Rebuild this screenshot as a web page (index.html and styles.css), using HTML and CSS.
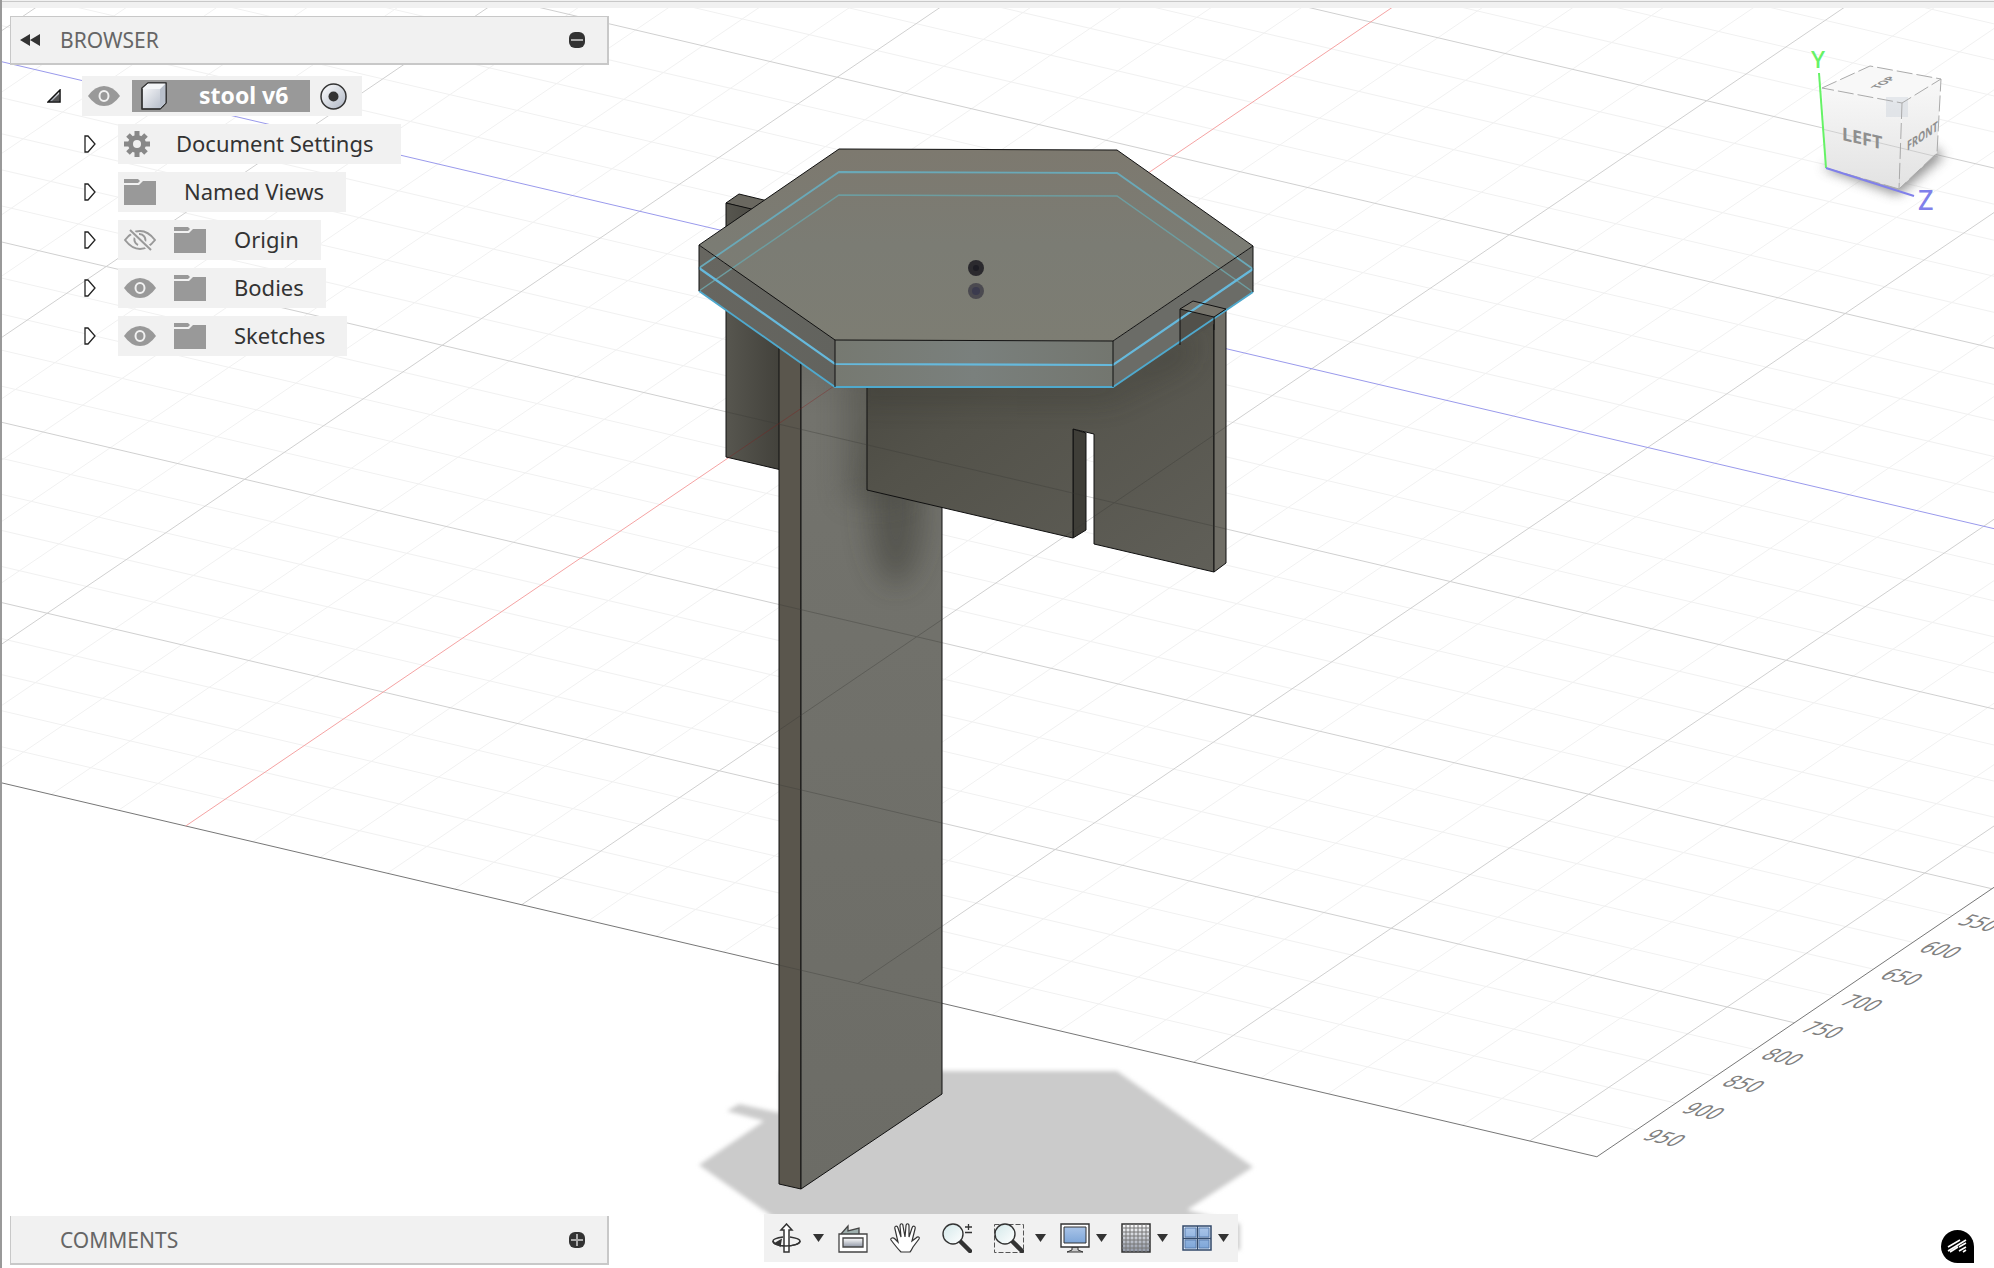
FILE: index.html
```html
<!DOCTYPE html>
<html lang="en">
<head>
<meta charset="utf-8">
<title>stool v6</title>
<link rel="stylesheet" href="styles.css">
</head>
<body>
<svg class="defs" width="0" height="0" aria-hidden="true">
  <defs>
    <linearGradient id="steel" x1="0" y1="0" x2="1" y2="1"><stop offset="0" stop-color="#fff"/><stop offset="1" stop-color="#aeb6c4"/></linearGradient>
    <linearGradient id="lens" x1="0" y1="0" x2="1" y2="1"><stop offset="0" stop-color="#d3e8ea"/><stop offset="1" stop-color="#fff"/></linearGradient>
    <linearGradient id="screen" x1="0" y1="0" x2="0" y2="1"><stop offset="0" stop-color="#a9c4e8"/><stop offset="1" stop-color="#7ea6d8"/></linearGradient>
    <linearGradient id="fade" x1="0" y1="0" x2="0" y2="1"><stop offset="0" stop-color="#fff"/><stop offset="1" stop-color="#9097a6"/></linearGradient>
  </defs>
  <symbol id="eye" viewBox="0 0 32 20"><path d="M0 10Q7 0 16 0t16 10Q25 20 16 20T0 10z" fill="#999"/><ellipse cx="16" cy="10" rx="4.500" ry="5" fill="none" stroke="#f1f1f1" stroke-width="2"/></symbol>
  <symbol id="eye-off" viewBox="0 0 32 22"><path d="M1 11Q8 2 16 2t15 9Q24 20 16 20T1 11zM11 8a6 6 0 0 0 3 8M15 5a6 6 0 0 1 6 8M14 9l5 5" fill="none" stroke="#999" stroke-width="2"/><path d="M6 1l21 20" stroke="#f1f1f1" stroke-width="5"/><path d="M6 1l21 20" stroke="#999" stroke-width="2"/></symbol>
  <symbol id="folder" viewBox="0 0 32 26"><path d="M0 0h14l2 2-2 2H0zM0 6h15l4-4h13v24H0z" fill="#999"/></symbol>
  <symbol id="twisty" viewBox="0 0 12 18"><path d="M1 1h3l7 8-7 8H1z" fill="#fff" stroke="#222" stroke-width="1.300"/></symbol>
  <symbol id="caret" viewBox="0 0 11 8"><path d="M0 0h11L5.500 8z" fill="#333"/></symbol>
</svg>

<main class="app">
  <svg class="canvas" viewBox="0 0 1994 1268" preserveAspectRatio="xMidYMid slice" role="img" aria-label="Stool model on the ground grid">
    <defs>
      <filter id="soft" x="-10%" y="-10%" width="120%" height="120%"><feGaussianBlur stdDeviation="2"/></filter>
      <filter id="wide" x="-50%" y="-50%" width="200%" height="200%"><feGaussianBlur stdDeviation="14"/></filter>
      <linearGradient id="bar" x1="0" y1="0" x2="1" y2="1"><stop offset="0" stop-color="#46453e"/><stop offset=".35" stop-color="#53524a"/><stop offset="1" stop-color="#605f58"/></linearGradient>
      <linearGradient id="back" x1="0" y1="0" x2="1" y2="0"><stop offset="0" stop-color="#57564f"/><stop offset="1" stop-color="#3f3e38"/></linearGradient>
      <linearGradient id="leg" x1="0" y1="0" x2="0" y2="1"><stop offset="0" stop-color="#666660"/><stop offset=".12" stop-color="#73736d"/><stop offset="1" stop-color="#6c6c66"/></linearGradient>
      <linearGradient id="seat" x1="0" y1="0" x2="0" y2="1"><stop offset="0" stop-color="#7d796f"/><stop offset=".5" stop-color="#7b7c74"/><stop offset="1" stop-color="#7d7d73"/></linearGradient>
      <linearGradient id="side" x1="0" y1="0" x2="1" y2="0"><stop offset="0" stop-color="#676660"/><stop offset="1" stop-color="#62635e"/></linearGradient>
      <linearGradient id="rim" x1="0" y1="0" x2="1" y2="0"><stop offset="0" stop-color="#767971"/><stop offset=".5" stop-color="#7a807d"/><stop offset="1" stop-color="#73766f"/></linearGradient>
      <clipPath id="legclip"><path d="M801 380L942 380V1094L801 1189z"/></clipPath>
      <clipPath id="barclip"><path d="M867 380H1113L1214 317V572L867 490z"/></clipPath>
      <clipPath id="solid"><path d="M726 300L801 350 835 387H1113L1226 305V563L1214 572 1094 544V434L1086 433V530L1072 538 942 508V1094L801 1189 779 1184V470L726 457z"/></clipPath>
    </defs>
    <g class="grid" transform="matrix(39.5 -26.8 67.2 15.75 185.7 826)">
      <path class="minor" d="M0-16h36M0-14h36M0-13h36M0-12h36M0-11h36M0-9h36M0-8h36M0-7h36M0-6h36M0-4h36M0-3h36M0-2h36M0-1h36M0 1h36M0 2h36M0 3h36M0 4h36M0 6h36M0 7h36M0 8h36M0 9h36M0 11h36M0 12h36M0 13h36M0 14h36M0 16h36M0 17h36M0 18h36M0 19h36"/>
      <path class="minor" d="M1-17v38M2-17v38M3-17v38M4-17v38M6-17v38M7-17v38M8-17v38M9-17v38M11-17v38M12-17v38M13-17v38M14-17v38M16-17v38M17-17v38M18-17v38M19-17v38M21-17v38M22-17v38M23-17v38M24-17v38M26-17v38M27-17v38M28-17v38M29-17v38M31-17v38M32-17v38M33-17v38M34-17v38"/>
      <path class="major" d="M0-15h36M0-10h36M0-5h36M0 5h36M0 10h36M0 15h36M0 20h36M5-17v38M10-17v38M15-17v38M25-17v38M30-17v38M35-17v38"/>
      <path class="edge" d="M0-17V21H36"/>
      <path class="red" d="M0 0h36"/>
      <path class="blue" d="M20-17v38"/>
    </g>
    <g class="marks">
      <text transform="translate(1956 924) rotate(13) skewX(-42)">550</text>
      <text transform="translate(1917 951) rotate(13) skewX(-42)">600</text>
      <text transform="translate(1878 978) rotate(13) skewX(-42)">650</text>
      <text transform="translate(1838 1004) rotate(13) skewX(-42)">700</text>
      <text transform="translate(1799 1031) rotate(13) skewX(-42)">750</text>
      <text transform="translate(1759 1058) rotate(13) skewX(-42)">800</text>
      <text transform="translate(1720 1085) rotate(13) skewX(-42)">850</text>
      <text transform="translate(1680 1112) rotate(13) skewX(-42)">900</text>
      <text transform="translate(1641 1139) rotate(13) skewX(-42)">950</text>
    </g>

    <path d="M780 1071H1117L1253 1167 1187 1210 1240 1224V1250H820L699 1165 764 1121 727 1111 739 1104 780 1113z" fill="#cbcbcb" filter="url(#soft)"/>

    <g class="ink">
      <path d="M726 203L739 194 772 202 760 212z" fill="#6a6860"/>
      <path d="M726 203L790 218V472L726 457z" fill="url(#back)"/>
      <path d="M779 300L801 310V1189L779 1184z" fill="#5a564d"/>
      <path d="M801 310H942V1094L801 1189z" fill="url(#leg)"/>
    </g>
    <g clip-path="url(#legclip)"><ellipse cx="896" cy="505" rx="28" ry="80" fill="#35342e" opacity=".45" filter="url(#wide)"/><path d="M845 370h60v130h-60z" fill="#45443d" opacity=".4" filter="url(#wide)"/></g>
    <g class="ink">
      <path d="M1073 429L1086 433V530L1073 538z" fill="#3f3e38"/>
      <path d="M867 370L1113 350 1180 309 1214 317V572L1094 544V434L1073 429V538L867 490z" fill="url(#bar)"/>
      <path d="M1214 317L1226 309V563L1214 572z" fill="#706e66"/>
    </g>
    <g clip-path="url(#barclip)"><path d="M850 380h270l70-50v30l-80 40H850z" fill="#35342d" opacity=".4" filter="url(#wide)"/></g>

    <g clip-path="url(#solid)">
      <g class="grid ghost" transform="matrix(39.5 -26.8 67.2 15.75 185.7 826)">
        <path class="dark" d="M0 5h36M0 10h36M0 15h36M5-17v38M10-17v38M15-17v38M0-17v38"/>
        <path class="crimson" d="M0 0h36"/>
      </g>
    </g>

    <path d="M699 245L835 340V387L699 291z" fill="url(#side)"/>
    <path d="M1253 246L1113 341V387L1253 292z" fill="#6b6c67"/>
    <path d="M835 340L1113 341V387H835z" fill="url(#rim)"/>
    <path d="M839 149L1117 150 1253 246 1113 341 835 340 699 245z" fill="url(#seat)"/>
    <path d="M1180 309L1214 317V324L1180 345z" fill="#52514b"/>
    <path d="M1180 309L1193 301 1226 309 1214 317z" fill="#76746b"/>
    <g fill="none" stroke="#4fa9cd">
      <path d="M699 291L839 195 1117 196 1253 292" stroke="#6d9da0" stroke-width="1.500"/>
      <path d="M699 268L839 172 1117 173 1253 269" stroke="#6aa9b8" stroke-width="1.800"/>
      <path d="M699 291L835 387 1113 387 1253 292" stroke-width="1.800"/>
      <path d="M699 268L835 364 1113 365 1253 269" stroke="#66b9dc" stroke-width="2.200"/>
    </g>
    <g fill="none" stroke="#111" stroke-width="1">
      <path d="M839 149L1117 150 1253 246 1113 341 835 340 699 245z"/>
      <path d="M699 245V291M835 340V387M1113 341V387M1253 246V292M1180 345V309L1193 301 1226 309 1214 317 1180 309M1214 317V330"/>
    </g>
    <circle cx="976" cy="268" r="8" fill="#2b2a2e"/><circle cx="976" cy="268" r="3" fill="#1d1d24"/>
    <circle cx="976" cy="291" r="8" fill="#4b4a50"/><circle cx="976" cy="291" r="4" fill="#3b3b4e"/>
  </svg>

  <div class="topstrip"></div>
  <div class="workspace">
    <nav class="browser" aria-label="Browser">
      <header class="panel">
        <button class="plain collapse" aria-label="Collapse"><svg width="20" height="12" viewBox="0 0 20 12"><path d="M10 0v12L0 6zM20 0v12L10 6z" fill="#333"/></svg></button>
        <h2>BROWSER</h2>
        <button class="plain" aria-label="Minimize"><svg width="16" height="16"><rect width="16" height="16" rx="6" fill="#333"/><path d="M2 8h12" stroke="#aaa" stroke-width="2"/></svg></button>
      </header>
      <ul class="tree">
        <li class="root">
          <button class="plain twisty" aria-label="Collapse stool v6"><svg width="14" height="14"><path d="M1 13L13 1V13z" fill="url(#fade)" stroke="#111" stroke-width="1.500"/><path d="M5 12L12 5V12z" fill="#555"/></svg></button>
          <div class="row">
            <svg width="32" height="20"><use href="#eye"/></svg>
            <span class="name"><svg width="27" height="28" viewBox="0 0 27 28"><path d="M3 27h17l6-7V5l-3 20z" fill="#666"/><path d="M1 6l6-5h18v20l-6 6H1z" fill="url(#steel)" stroke="#333" stroke-width="1.500"/><path d="M19 7l6-6v20l-6 6z" fill="#b9c0cb"/><path d="M1 7h18l6-6H7z" fill="#f4f6f8"/><path d="M1 6l6-5h18v20l-6 6H1z" fill="none" stroke="#333"/></svg><span class="label">stool v6</span></span>
            <svg width="27" height="27" viewBox="0 0 27 27"><circle cx="13.500" cy="13.500" r="12.500" fill="url(#steel)" stroke="#333" stroke-width="1.500"/><circle cx="13.500" cy="13.500" r="5" fill="#333"/></svg>
          </div>
        </li>
        <li><button class="plain twisty" aria-label="Expand"><svg width="12" height="18"><use href="#twisty"/></svg></button>
          <div class="row gap-m"><svg width="26" height="26" viewBox="-13 -13 26 26"><g stroke="#888" stroke-width="5"><path d="M0-13V13M-13 0H13M-9-9L9 9M-9 9L9-9"/></g><circle r="9" fill="#888"/><circle r="4" fill="#f1f1f1"/></svg><span class="label">Document Settings</span></div></li>
        <li><button class="plain twisty" aria-label="Expand"><svg width="12" height="18"><use href="#twisty"/></svg></button>
          <div class="row gap-l"><svg width="32" height="26"><use href="#folder"/></svg><span class="label">Named Views</span></div></li>
        <li><button class="plain twisty" aria-label="Expand"><svg width="12" height="18"><use href="#twisty"/></svg></button>
          <div class="row"><svg width="32" height="22"><use href="#eye-off"/></svg><svg class="folder" width="32" height="26"><use href="#folder"/></svg><span class="label">Origin</span></div></li>
        <li><button class="plain twisty" aria-label="Expand"><svg width="12" height="18"><use href="#twisty"/></svg></button>
          <div class="row"><svg width="32" height="20"><use href="#eye"/></svg><svg class="folder" width="32" height="26"><use href="#folder"/></svg><span class="label">Bodies</span></div></li>
        <li><button class="plain twisty" aria-label="Expand"><svg width="12" height="18"><use href="#twisty"/></svg></button>
          <div class="row"><svg width="32" height="20"><use href="#eye"/></svg><svg class="folder" width="32" height="26"><use href="#folder"/></svg><span class="label">Sketches</span></div></li>
      </ul>
    </nav>

    <svg class="cube" width="214" height="200" viewBox="0 0 214 200" role="img" aria-label="View cube">
      <defs>
        <filter id="haze" x="-30%" y="-30%" width="160%" height="160%"><feGaussianBlur stdDeviation="6"/></filter>
        <linearGradient id="face" x1="0" y1="0" x2="0" y2="1"><stop offset="0" stop-color="#f8f8f8"/><stop offset="1" stop-color="#e2e2e2"/></linearGradient>
      </defs>
      <path d="M42 138L118 165 164 126 150 115 90 120z" fill="#777" opacity=".8" filter="url(#haze)"/>
      <path d="M42 58L122 73 119 159 46 138z" fill="url(#face)"/>
      <path d="M122 73L161 49 157 123 119 159z" fill="url(#face)"/>
      <path d="M42 58L90 36 161 49 122 73z" fill="#f8f8f8"/>
      <path d="M106 67h22v20h-22z" fill="#b9c4d2" opacity=".3"/>
      <g fill="none" stroke="#aaa" stroke-dasharray="16 4"><path d="M42 58L90 36 161 49 122 73zM122 73L119 159 157 123 161 49M46 138L119 159"/></g>
      <path d="M42 99L158 127" stroke="#999" opacity=".35"/>
      <path d="M39 43L46 138" stroke="#66f266" stroke-width="2"/>
      <path d="M46 138L134 166" stroke="#8080ea" stroke-width="2"/>
      <g class="face">
        <text font-size="18" transform="translate(62 110) skewY(13)">LEFT</text>
        <text font-size="11" transform="translate(127 121) rotate(-34) skewX(-34)">FRONT</text>
        <text font-size="11" transform="matrix(.85 -.53 .98 .19 98 59)">TOP</text>
      </g>
      <text class="axis" font-size="24" x="31" y="38" fill="#66f266">Y</text>
      <text class="axis" font-size="27" x="138" y="180" fill="#8080ea">Z</text>
    </svg>
  </div>

  <footer class="bottom">
    <section class="panel comments">
      <h2>COMMENTS</h2>
      <button class="plain" aria-label="Expand comments"><svg width="16" height="16"><rect width="16" height="16" rx="6" fill="#333"/><path d="M2 8h12M8 2v12" stroke="#aaa" stroke-width="2"/></svg></button>
    </section>
    <div class="toolbar" role="toolbar" aria-label="Navigation">
      <button class="plain drop" aria-label="Orbit"><svg width="30" height="30" viewBox="0 0 30 30" fill="none" stroke="#333" stroke-width="1.500"><path d="M11 14C4 15 1 16 1 18c0 3 6 5 13 5s14-2 14-5c0-2-4-3-10-4"/><path d="M14.500 1L20 7h-3v22h-5V7H9z" fill="#fff"/><path d="M1 18c0 3 6 5 13 5s14-2 14-5"/><path d="M4 20l5-3-1 6z" fill="#333"/></svg><svg width="11" height="8"><use href="#caret"/></svg></button>
      <button class="plain" aria-label="Look at"><svg width="30" height="30" viewBox="0 0 30 30" stroke="#444" stroke-width="1.300"><path d="M3 11L10 3v5l11-3v6" fill="#9fb0ae"/><path d="M1 11h28v18H1z" fill="#fff"/><path d="M5 15h20v9H5z" fill="url(#fade)"/></svg></button>
      <button class="plain" aria-label="Pan"><svg width="30" height="30" viewBox="0 0 30 30"><path d="M11 29C8 26 4 21 1 17c-1-2 2-3 4-1l3 3L5 6c-1-3 2-4 3-1l3 9L10 3c0-3 3-3 3 0l2 11 1-11c0-3 3-3 3 0v11l3-9c1-3 4-2 3 1l-3 12 4-3c2-2 4-1 3 1l-6 8c-1 2-2 4-3 5z" fill="#fff" stroke="#333" stroke-width="1.200"/></svg></button>
      <button class="plain" aria-label="Zoom"><svg width="30" height="30" viewBox="0 0 30 30"><path d="M19 19l9 9" stroke="#333" stroke-width="4.500" stroke-linecap="round"/><circle cx="11" cy="11" r="10" fill="url(#lens)" stroke="#333" stroke-width="1.400"/><path d="M23 4h7M26.500 1v6M23 9.500h7" stroke="#333" stroke-width="1.300"/></svg></button>
      <button class="plain drop" aria-label="Fit"><svg width="30" height="30" viewBox="0 0 30 30"><path d="M.5 1.500h29v28H.5z" fill="none" stroke="#555" stroke-dasharray="5 2"/><path d="M19 19l9 9" stroke="#333" stroke-width="4.500" stroke-linecap="round"/><circle cx="11" cy="11" r="10" fill="url(#lens)" stroke="#333" stroke-width="1.400"/></svg><svg width="11" height="8"><use href="#caret"/></svg></button>
      <button class="plain drop tight" aria-label="Display settings"><svg width="30" height="30" viewBox="0 0 30 30" stroke="#333"><path d="M12 24h6v3l5 2H7l5-2z" fill="#ccc"/><path d="M1 1h28v23H1z" fill="#fff" stroke-width="1.400"/><path d="M4 4h22v16H4z" fill="url(#screen)"/></svg><svg width="11" height="8"><use href="#caret"/></svg></button>
      <button class="plain drop tight" aria-label="Grid and snaps"><svg width="30" height="30" viewBox="0 0 30 30"><path d="M1 1h28v28H1z" fill="url(#fade)" stroke="#333" stroke-width="1.500"/><path d="M5 1v28M9 1v28M13 1v28M17 1v28M21 1v28M25 1v28M1 5h28M1 9h28M1 13h28M1 17h28M1 21h28M1 25h28" stroke="#777"/></svg><svg width="11" height="8"><use href="#caret"/></svg></button>
      <button class="plain drop tight" aria-label="Viewports"><svg width="30" height="30" viewBox="0 0 30 30"><path d="M1 3h28v24H1z" fill="#dce8f6" stroke="#334a6b" stroke-width="1.500"/><path d="M3 5h11v9H3zM17 5h10v9H17zM3 17h11v8H3zM17 17h10v8H17z" fill="url(#screen)" stroke="#5b7fb0"/><path d="M15.500 3v24M1 15.500h28" stroke="#334a6b" stroke-width="1.300"/></svg><svg width="11" height="8"><use href="#caret"/></svg></button>
    </div>
    <a class="badge" href="#home" aria-label="Home"><svg width="33" height="33" viewBox="0 0 33 33"><path d="M16.500 0A16.500 16.500 0 0 1 33 16.500V33H16.500a16.500 16.500 0 0 1 0-33z" fill="#000"/><path d="M7 17l12-7M7 21l18-11M9 22l8-5M18 17l7-4M18 21l7-4M22 22l3-2" stroke="#fff" stroke-width="1.600"/></svg></a>
  </footer>
</main>
</body>
</html>
```
FILE: styles.css
```css
* { box-sizing: border-box; }

body {
  margin: 0;
  font-family: "Noto Sans", "Open Sans", sans-serif;
  font-size: 22px;
  line-height: 28px;
  color: #333;
  background: #fff;
}

svg { display: block; flex: none; }
.defs { position: absolute; }

.app {
  position: relative;
  display: flex;
  flex-direction: column;
  min-height: 100vh;
  overflow: hidden;
  border-left: 2px solid #999;
}

.canvas {
  position: absolute;
  left: -2px;
  top: 0;
  width: calc(100% + 2px);
  height: 100%;
}

.grid path { fill: none; stroke-width: 1; vector-effect: non-scaling-stroke; }
.grid .minor { stroke: #f1f1f1; }
.grid .major { stroke: #d0d0d0; }
.grid .edge { stroke: #777; }
.grid .red { stroke: #f5a3a3; }
.grid .blue { stroke: #9a9aec; }
.ghost { opacity: .35; }
.grid .dark { stroke: #3a3a36; }
.grid .crimson { stroke: #8a1a1a; }

.marks { font-family: "DejaVu Sans", sans-serif; font-size: 18px; fill: #808080; }
.ink path { stroke: #111; stroke-width: 1; }

.topstrip {
  position: relative;
  height: 8px;
  margin-left: -2px;
  background: linear-gradient(#f1f1f1 1px, #c8c8c8 1px, #c8c8c8 2px, #f1f1f1 2px);
}

.workspace {
  position: relative;
  flex: 1;
  display: flex;
  justify-content: space-between;
  align-items: flex-start;
}

.browser { width: 607px; padding: 8px 0 0 8px; }
.cube { margin-top: 22px; }
.face { font-family: "Noto Sans", sans-serif; font-weight: 700; fill: #8f8f8f; }
.axis { font-family: "Noto Sans", sans-serif; font-weight: 500; }

.plain {
  display: flex;
  align-items: center;
  justify-content: center;
  padding: 0;
  border: 0;
  background: none;
}

.panel {
  display: flex;
  align-items: center;
  height: 49px;
  padding: 0 22px 0 9px;
  background: #f1f1f1;
  border: 1px solid #c8c8c8;
  border-width: 1px 2px 2px 1px;
}

.panel h2 {
  flex: 1;
  margin: 0 0 0 20px;
  font-size: 21px;
  font-weight: 400;
  color: #666;
}

.tree {
  display: flex;
  flex-direction: column;
  gap: 8px;
  margin: 0;
  padding: 11px 0 0 74px;
  list-style: none;
}

.tree li { display: flex; align-items: center; gap: 22px; }
.tree .root { margin-left: -37px; gap: 21px; }

.row {
  display: flex;
  align-items: center;
  height: 40px;
  padding: 0 22px 0 6px;
  background: #f1f1f1;
}

.label { padding-bottom: 2px; }
.gap-m { gap: 26px; padding-right: 28px; }
.gap-l { gap: 28px; }
.folder { margin: 0 28px 0 18px; }
.root .row { gap: 12px 10px; padding-right: 15px; }

.name {
  display: flex;
  align-items: center;
  gap: 31px;
  height: 32px;
  margin-left: 2px;
  padding: 0 22px 0 9px;
  font-size: 23px;
  font-weight: 700;
  color: #fff;
  background: #999;
}

.bottom {
  position: relative;
  display: grid;
  grid-template-columns: 1fr auto 1fr;
  align-items: end;
  padding: 0 2px 3px 8px;
}

.comments { width: 599px; border-top: 0; padding-left: 29px; }

.toolbar {
  display: flex;
  align-items: center;
  gap: 22px;
  height: 48px;
  margin-bottom: 3px;
  padding: 0 9px 0 8px;
  background: #f1f1f1;
}

.toolbar .drop { gap: 11px; margin-right: -8px; }
.toolbar .tight { gap: 6px; }
.toolbar .tight:last-child { margin-right: 0; }

.badge { justify-self: end; margin: 0 18px 2px 0; }
```
